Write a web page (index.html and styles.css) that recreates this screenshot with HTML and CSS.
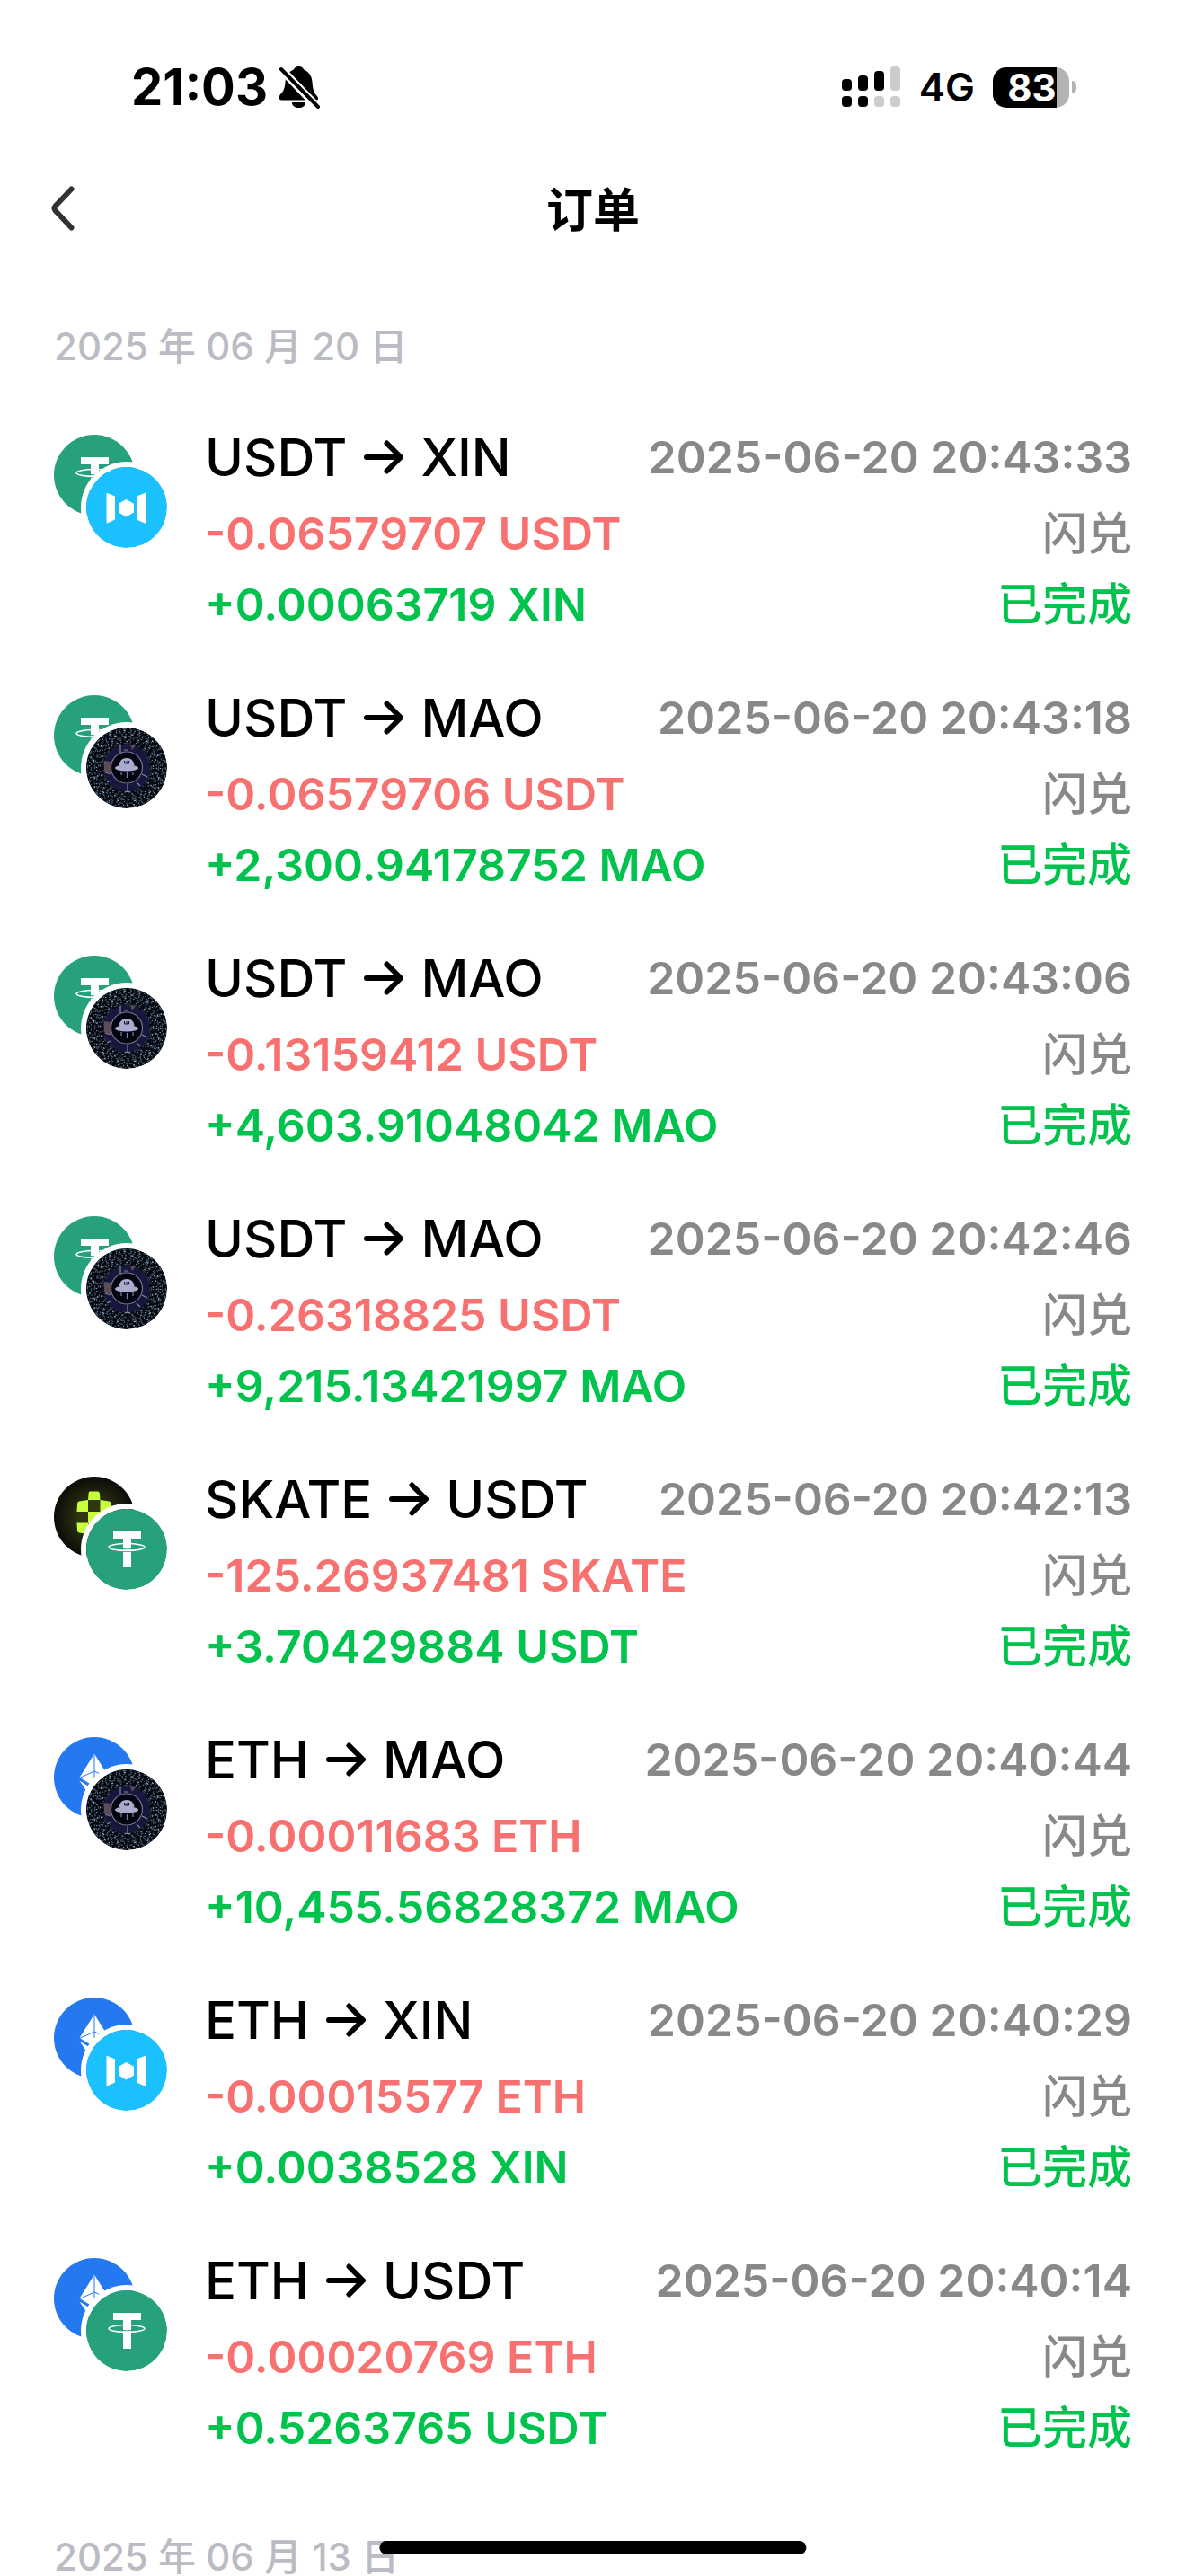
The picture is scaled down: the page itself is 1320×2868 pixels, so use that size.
FILE: index.html
```html
<!DOCTYPE html>
<html lang="zh-CN">
<head>
    <meta charset="UTF-8">
    <meta name="viewport" content="width=device-width, initial-scale=1.0">
    <title>订单</title>
    <link rel="stylesheet" href="styles.css">
</head>
<body>
    <!-- 币种图标 -->
    <svg class="sprite" width="0" height="0" aria-hidden="true">
        <defs>
            <radialGradient id="skate-bg">
                <stop offset="0" stop-color="#4a5224"/>
                <stop offset="0.55" stop-color="#24280f"/>
                <stop offset="1" stop-color="#0b0c08"/>
            </radialGradient>
        </defs>
        <symbol id="usdt" viewBox="0 0 90 90">
            <circle cx="45" cy="45" r="45" fill="#27a17c"/>
            <path d="M30 25h31v8H50v32h-9V33H30z" fill="#fff"/>
            <path d="M41 44.5q4.500.8 9 0" fill="none" stroke="#27a17c"/>
            <ellipse cx="45" cy="42.500" rx="20" ry="4" fill="none" stroke="#fff" stroke-width="1.500"/>
            <path d="M41 47.500h9" stroke="#27a17c" stroke-width="0.8"/>
        </symbol>
        <symbol id="xin" viewBox="0 0 90 90">
            <circle cx="45" cy="45" r="45" fill="#1bc0ff"/>
            <path d="M22.500 29.500q0-1 1-.6L32 32.500v26l-8.500 4q-1 .4-1-.6zM66 29.500q0-1-1-.6l-9 3.600v26l9 4q1 .4 1-.6zM44.500 36l8.500 4.800v9.700l-8.500 5-8.500-5v-9.700z" fill="#fff"/>
        </symbol>
        <symbol id="eth" viewBox="0 0 90 90">
            <circle cx="45" cy="45" r="45" fill="#2478f0"/>
            <path d="M45 18.500L61.500 45 45 55 28.500 45zM28.500 48.500L45 58.500l16.500-10L45 73z" fill="#fff"/>
            <path d="M45 19v26M28.500 45.500L45 38l16.500 7.500" fill="none" stroke="#2478f0" stroke-width="1"/>
            <path d="M29 47l10 6" stroke="#2478f0" stroke-width="2.500"/>
        </symbol>
        <symbol id="skate" viewBox="0 0 90 90">
            <circle cx="45" cy="45" r="45" fill="url(#skate-bg)"/>
            <path d="M38 26h13v13H38zM26 39h12v12H26z" fill="#30370f"/>
            <path d="M40 16.500h9q1.500 0 1.800 2L51.500 26H38l.6-7.500q.2-2 1.400-2zM28 27.500L38 26v13H25.500l.6-9q.2-2.200 1.900-2.500zM51.500 26l10 1.500q1.700.3 1.900 2.500l.6 9H51.500zM38 39h13.500v13H38zM25.500 51.500H38V64l-10-1.500q-1.700-.3-1.900-2.500zM51.500 51.500H64l-.6 8.500q-.2 2.200-1.900 2.500L51.500 64z" fill="#c6ff3a"/>
        </symbol>
        <symbol id="mao" viewBox="0 0 90 90">
            <circle cx="45" cy="45" r="45" fill="#05070f"/>
            <g fill="none" stroke-width="1.300">
                <circle cx="45" cy="45" r="43.500" stroke="#4c6378" stroke-dasharray="2 3 1 2 4 4"/>
                <circle cx="45" cy="45" r="41.500" stroke="#a3b6c6" stroke-dasharray="1 4 2 6 1 3"/>
                <circle cx="45" cy="45" r="39.500" stroke="#3b5267" stroke-dasharray="4 2 2 3"/>
                <circle cx="45" cy="45" r="37.500" stroke="#92a9bc" stroke-dasharray="1 3 1 5 3 6"/>
                <circle cx="45" cy="45" r="35.500" stroke="#3d566d" stroke-dasharray="3 3 5 2"/>
                <circle cx="45" cy="45" r="33.500" stroke="#8ca3b9" stroke-dasharray="1 4 2 5 1 2"/>
                <circle cx="45" cy="45" r="31.500" stroke="#3d556c" stroke-dasharray="3 2 1 4"/>
                <circle cx="45" cy="45" r="29.500" stroke="#7b90a5" stroke-dasharray="1 5 2 3"/>
                <circle cx="45" cy="45" r="27.500" stroke="#31445a" stroke-dasharray="2 3 4 2"/>
            </g>
            <circle cx="45" cy="45" r="22" fill="none" stroke="#17163c" stroke-width="8"/>
            <circle cx="45" cy="45" r="26" fill="none" stroke="#33334f" stroke-width="1" stroke-dasharray="5 3 9 4 2 5"/>
            <path d="M38 20v11M42 25h5M46 63v9M43 71.500h6M27 52l-6-2M27 59l-4 2M62 52l6 3M56 61l4 4" fill="none" stroke="#8a8a9e" stroke-width="1.200"/>
            <path d="M20 37l7 1v14l-7-3zM49 19l6 1-4 5z" fill="#5b4c56"/>
            <circle cx="45" cy="44.500" r="17.500" fill="#03040e" stroke="#77799a" stroke-width="1.200"/>
            <path d="M36.500 42q1-8 8.500-8t8.500 8z" fill="#aaaccd"/>
            <ellipse cx="45" cy="45" rx="13" ry="3.500" fill="#aaaccd"/>
            <path d="M42.500 37v3h5v-3M45 37v3" fill="none" stroke="#111428" stroke-width="1"/>
            <path d="M39 49v4M45.500 50v6M52 49v4" stroke="#7c80a8" stroke-width="1.200"/>
        </symbol>
        <symbol id="arrow" viewBox="0 0 44 38">
            <path d="M3 19h37M25.500 3.500L41 19 25.500 34.500" fill="none" stroke="#000" stroke-width="6" stroke-linecap="round" stroke-linejoin="round"/>
        </symbol>
    </svg>

    <div class="screen">
        <div class="status-bar">
            <div class="status-left">
                <span class="clock">21:03</span>
                <svg class="bell" viewBox="0 0 46 48" width="46" height="48">
                    <path d="M22.500 1c3 0 5 1.500 5.700 3.600C34 7 37 12 37.500 18c.6 9 2 12 5 15.500 2 2.500 2.500 5-.5 5H3.500C0 38.500 0 34 2.500 31.500 6 28 7 25 7.500 18 8 12 11 7 16.800 4.600 17.500 2.500 19.500 1 22.500 1z"/>
                    <path d="M15 41h15c0 4-3.500 6-7.500 6S15 45 15 41z"/>
                    <path d="M3 4l41 43" stroke="#fff" stroke-width="9"/>
                    <path d="M3 4l41 42" stroke="#000" stroke-width="4" stroke-linecap="round"/>
                </svg>
            </div>
            <div class="status-right">
                <svg class="signal" viewBox="0 0 66 46" width="66" height="46">
                    <g fill="#000">
                        <rect x="0" y="14" width="11" height="13" rx="4"/>
                        <rect x="18" y="10" width="11" height="17" rx="4"/>
                        <rect x="36" y="5" width="11" height="22" rx="4"/>
                        <rect x="0" y="33" width="11" height="12" rx="4"/>
                        <rect x="18" y="33" width="11" height="12" rx="4"/>
                    </g>
                    <g fill="#ccc">
                        <rect x="54" y="0" width="11" height="27" rx="4"/>
                        <rect x="36" y="33" width="11" height="12" rx="4"/>
                        <rect x="54" y="33" width="11" height="12" rx="4"/>
                    </g>
                </svg>
                <span class="network">4G</span>
                <div class="battery">
                    <div class="battery-body">83</div>
                    <div class="battery-tip"></div>
                </div>
            </div>
        </div>

        <header class="nav">
            <button class="back" aria-label="返回">
                <svg viewBox="0 0 26 50" width="26" height="50">
                    <path d="M22.500 3.500L4.500 22.500q-2 2.500 0 5l18 19" fill="none" stroke="#303233" stroke-width="6" stroke-linecap="round" stroke-linejoin="round"/>
                </svg>
            </button>
            <h1>订单</h1>
        </header>

        <main>
            <h2 class="day">2025 年 06 月 20 日</h2>
            <ul class="orders">
                <li class="order">
                    <div class="coins"><svg class="coin"><use href="#usdt"/></svg><svg class="coin coin-to"><use href="#xin"/></svg></div>
                    <div class="info">
                        <div class="line line-top"><h3 class="pair">USDT <svg class="arrow"><use href="#arrow"/></svg> XIN</h3><time class="muted">2025-06-20 20:43:33</time></div>
                        <div class="line"><span class="out">-0.06579707 USDT</span><span class="tag muted">闪兑</span></div>
                        <div class="line"><span class="in">+0.00063719 XIN</span><span class="tag in">已完成</span></div>
                    </div>
                </li>
                <li class="order">
                    <div class="coins"><svg class="coin"><use href="#usdt"/></svg><svg class="coin coin-to"><use href="#mao"/></svg></div>
                    <div class="info">
                        <div class="line line-top"><h3 class="pair">USDT <svg class="arrow"><use href="#arrow"/></svg> MAO</h3><time class="muted">2025-06-20 20:43:18</time></div>
                        <div class="line"><span class="out">-0.06579706 USDT</span><span class="tag muted">闪兑</span></div>
                        <div class="line"><span class="in">+2,300.94178752 MAO</span><span class="tag in">已完成</span></div>
                    </div>
                </li>
                <li class="order">
                    <div class="coins"><svg class="coin"><use href="#usdt"/></svg><svg class="coin coin-to"><use href="#mao"/></svg></div>
                    <div class="info">
                        <div class="line line-top"><h3 class="pair">USDT <svg class="arrow"><use href="#arrow"/></svg> MAO</h3><time class="muted">2025-06-20 20:43:06</time></div>
                        <div class="line"><span class="out">-0.13159412 USDT</span><span class="tag muted">闪兑</span></div>
                        <div class="line"><span class="in">+4,603.91048042 MAO</span><span class="tag in">已完成</span></div>
                    </div>
                </li>
                <li class="order">
                    <div class="coins"><svg class="coin"><use href="#usdt"/></svg><svg class="coin coin-to"><use href="#mao"/></svg></div>
                    <div class="info">
                        <div class="line line-top"><h3 class="pair">USDT <svg class="arrow"><use href="#arrow"/></svg> MAO</h3><time class="muted">2025-06-20 20:42:46</time></div>
                        <div class="line"><span class="out">-0.26318825 USDT</span><span class="tag muted">闪兑</span></div>
                        <div class="line"><span class="in">+9,215.13421997 MAO</span><span class="tag in">已完成</span></div>
                    </div>
                </li>
                <li class="order">
                    <div class="coins"><svg class="coin"><use href="#skate"/></svg><svg class="coin coin-to"><use href="#usdt"/></svg></div>
                    <div class="info">
                        <div class="line line-top"><h3 class="pair">SKATE <svg class="arrow"><use href="#arrow"/></svg> USDT</h3><time class="muted">2025-06-20 20:42:13</time></div>
                        <div class="line"><span class="out">-125.26937481 SKATE</span><span class="tag muted">闪兑</span></div>
                        <div class="line"><span class="in">+3.70429884 USDT</span><span class="tag in">已完成</span></div>
                    </div>
                </li>
                <li class="order">
                    <div class="coins"><svg class="coin"><use href="#eth"/></svg><svg class="coin coin-to"><use href="#mao"/></svg></div>
                    <div class="info">
                        <div class="line line-top"><h3 class="pair">ETH <svg class="arrow"><use href="#arrow"/></svg> MAO</h3><time class="muted">2025-06-20 20:40:44</time></div>
                        <div class="line"><span class="out">-0.00011683 ETH</span><span class="tag muted">闪兑</span></div>
                        <div class="line"><span class="in">+10,455.56828372 MAO</span><span class="tag in">已完成</span></div>
                    </div>
                </li>
                <li class="order">
                    <div class="coins"><svg class="coin"><use href="#eth"/></svg><svg class="coin coin-to"><use href="#xin"/></svg></div>
                    <div class="info">
                        <div class="line line-top"><h3 class="pair">ETH <svg class="arrow"><use href="#arrow"/></svg> XIN</h3><time class="muted">2025-06-20 20:40:29</time></div>
                        <div class="line"><span class="out">-0.00015577 ETH</span><span class="tag muted">闪兑</span></div>
                        <div class="line"><span class="in">+0.0038528 XIN</span><span class="tag in">已完成</span></div>
                    </div>
                </li>
                <li class="order">
                    <div class="coins"><svg class="coin"><use href="#eth"/></svg><svg class="coin coin-to"><use href="#usdt"/></svg></div>
                    <div class="info">
                        <div class="line line-top"><h3 class="pair">ETH <svg class="arrow"><use href="#arrow"/></svg> USDT</h3><time class="muted">2025-06-20 20:40:14</time></div>
                        <div class="line"><span class="out">-0.00020769 ETH</span><span class="tag muted">闪兑</span></div>
                        <div class="line"><span class="in">+0.5263765 USDT</span><span class="tag in">已完成</span></div>
                    </div>
                </li>
            </ul>
            <h2 class="day">2025 年 06 月 13 日</h2>
        </main>
        <div class="home-indicator"></div>
    </div>
</body>
</html>
```
FILE: styles.css
```css
* {
    box-sizing: border-box;
}
body {
    margin: 0;
    background: #fff;
    color: #000;
    font-family: Inter, "Noto Sans CJK SC", sans-serif;
}
h1, h2, h3, ul {
    margin: 0;
    padding: 0;
}
.sprite {
    position: absolute;
}
.screen {
    position: relative;
    height: 100vh;
    overflow: hidden;
}

/* 状态栏 */
.status-bar {
    display: flex;
    justify-content: space-between;
    align-items: center;
    height: 142px;
    padding: 62px 122px 10px 146px;
}
.status-left,
.status-right {
    display: flex;
    align-items: center;
}
.status-left {
    gap: 12px;
}
.status-right {
    gap: 20px;
}
.clock {
    font-size: 56px;
    font-weight: 700;
}
.network {
    font-size: 44px;
    font-weight: 600;
}
.battery {
    display: flex;
    align-items: center;
    gap: 3px;
}
.battery-body {
    width: 85px;
    height: 45px;
    padding-left: 2px;
    border-radius: 15px;
    background: linear-gradient(to right, #000 83%, #b3b3b3 83%);
    color: #fff;
    font-size: 42px;
    font-weight: 700;
    line-height: 45px;
    text-align: center;
}
.battery-tip {
    width: 5px;
    height: 14px;
    border-radius: 0 5px 5px 0;
    background: #b3b3b3;
}

/* 导航 */
.nav {
    display: grid;
    grid-template-columns: 1fr auto 1fr;
    align-items: center;
    height: 180px;
    padding: 0 57px;
}
.nav h1 {
    padding-top: 6px;
    font-size: 52px;
    font-weight: 700;
    line-height: 76px;
}
.back {
    display: flex;
    justify-self: start;
    padding: 0;
    border: none;
    background: none;
    cursor: pointer;
}

/* 订单列表 */
.day {
    padding: 24px 60px 37px;
    color: #bbbcc3;
    font-size: 42px;
    font-weight: 500;
    line-height: 80px;
}
.orders {
    list-style: none;
}
.order {
    display: flex;
    gap: 42px;
    padding: 0 60px 40px;
}
.coins {
    position: relative;
    width: 126px;
    height: 126px;
    margin-top: 21px;
}
.coin {
    display: block;
    width: 90px;
    height: 90px;
}
.coin-to {
    position: absolute;
    right: 0;
    bottom: 0;
    border-radius: 50%;
    box-shadow: 0 0 0 6px #fff;
}
.info {
    flex: 1;
}
.line {
    display: flex;
    justify-content: space-between;
    height: 79px;
    font-size: 50px;
    font-weight: 600;
    line-height: 79px;
}
.line-top {
    height: 92px;
    line-height: 92px;
}
.pair {
    display: flex;
    align-items: center;
    gap: 19px;
    font-size: 58px;
    font-weight: 500;
}
.arrow {
    width: 44px;
    height: 38px;
}
.tag {
    font-weight: 500;
}
.muted {
    color: #888;
}
.out {
    color: #f87171;
}
.in {
    color: #00c34e;
}

.home-indicator {
    position: absolute;
    left: 50%;
    bottom: 24px;
    width: 36%;
    height: 15px;
    border-radius: 8px;
    background: #000;
    transform: translateX(-50%);
}
```
